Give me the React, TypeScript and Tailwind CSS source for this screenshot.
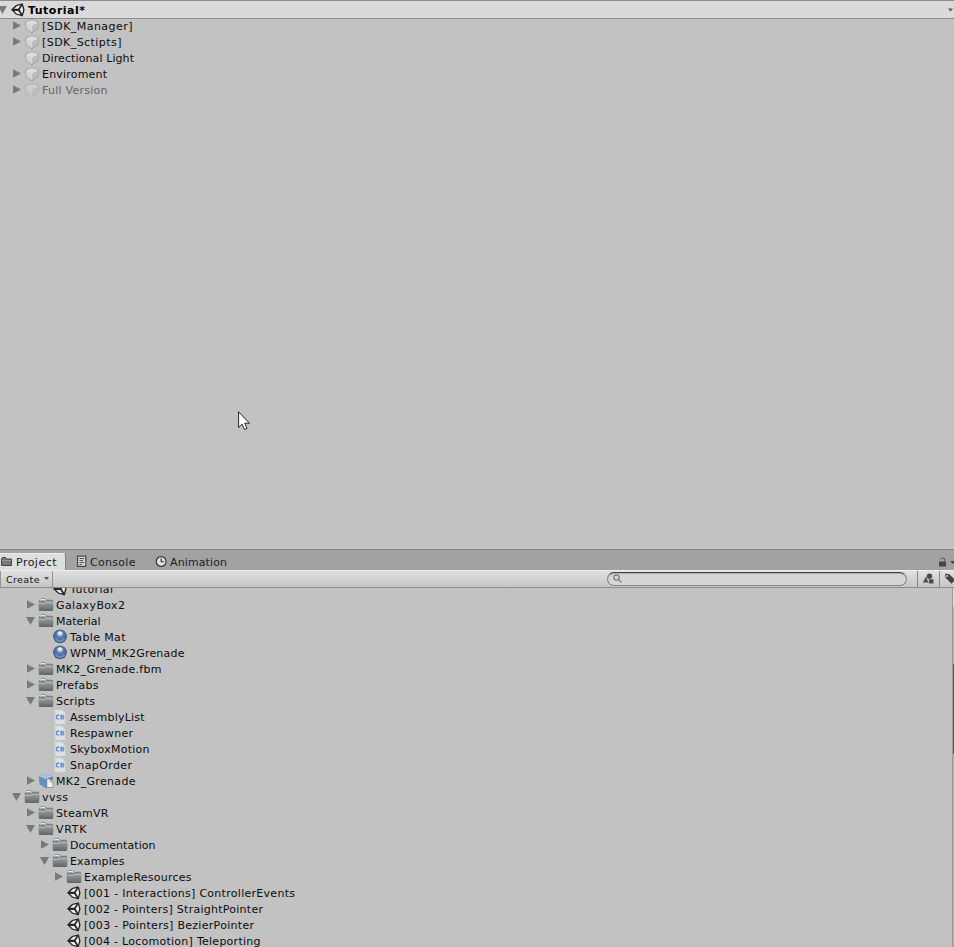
import type { ReactNode } from "react";

type Kind = "cube" | "folder" | "material" | "script" | "model" | "scene";

interface Item {
  label: string;
  kind: Kind;
  depth: number;
  arrow?: "right" | "down";
  dim?: boolean;
  width: number;
}

const hierarchy: Item[] = [
  { label: "[SDK_Manager]", kind: "cube", depth: 1, arrow: "right", width: 90.5 },
  { label: "[SDK_Sctipts]", kind: "cube", depth: 1, arrow: "right", width: 79.5 },
  { label: "Directional Light", kind: "cube", depth: 1, width: 92 },
  { label: "Enviroment", kind: "cube", depth: 1, arrow: "right", width: 65 },
  { label: "Full Version", kind: "cube", depth: 1, arrow: "right", dim: true, width: 65.5 },
];

const project: Item[] = [
  { label: "Tutorial", kind: "scene", depth: 3, width: 43 },
  { label: "GalaxyBox2", kind: "folder", depth: 2, arrow: "right", width: 69 },
  { label: "Material", kind: "folder", depth: 2, arrow: "down", width: 44.5 },
  { label: "Table Mat", kind: "material", depth: 3, width: 55.5 },
  { label: "WPNM_MK2Grenade", kind: "material", depth: 3, width: 114.5 },
  { label: "MK2_Grenade.fbm", kind: "folder", depth: 2, arrow: "right", width: 105.5 },
  { label: "Prefabs", kind: "folder", depth: 2, arrow: "right", width: 42.5 },
  { label: "Scripts", kind: "folder", depth: 2, arrow: "down", width: 39 },
  { label: "AssemblyList", kind: "script", depth: 3, width: 74.5 },
  { label: "Respawner", kind: "script", depth: 3, width: 63 },
  { label: "SkyboxMotion", kind: "script", depth: 3, width: 79.5 },
  { label: "SnapOrder", kind: "script", depth: 3, width: 62 },
  { label: "MK2_Grenade", kind: "model", depth: 2, arrow: "right", width: 79.5 },
  { label: "vvss", kind: "folder", depth: 1, arrow: "down", width: 26 },
  { label: "SteamVR", kind: "folder", depth: 2, arrow: "right", width: 52.5 },
  { label: "VRTK", kind: "folder", depth: 2, arrow: "down", width: 30.5 },
  { label: "Documentation", kind: "folder", depth: 3, arrow: "right", width: 85.5 },
  { label: "Examples", kind: "folder", depth: 3, arrow: "down", width: 54.5 },
  { label: "ExampleResources", kind: "folder", depth: 4, arrow: "right", width: 107.5 },
  { label: "[001 - Interactions] ControllerEvents", kind: "scene", depth: 4, width: 211 },
  { label: "[002 - Pointers] StraightPointer", kind: "scene", depth: 4, width: 179 },
  { label: "[003 - Pointers] BezierPointer", kind: "scene", depth: 4, width: 170 },
  { label: "[004 - Locomotion] Teleporting", kind: "scene", depth: 4, width: 176.5 },
];

/* One line of text whose glyphs are spread over an exact advance width. */
function Label({ text, width, size = 11, bold = false, fill = "#0c0c0c" }: { text: string; width: number; size?: number; bold?: boolean; fill?: string }) {
  return (
    <svg width={width + 4} height="16" className="block shrink-0 overflow-visible font-['DejaVu_Sans',sans-serif]">
      <text x="0" y="12" fontSize={size} fontWeight={bold ? 700 : 400} fill={fill} textLength={width}>
        {text}
      </text>
    </svg>
  );
}

function Icon({ children, className = "" }: { children: ReactNode; className?: string }) {
  return (
    <svg width="16" height="16" viewBox="0 0 16 16" className={`block shrink-0 overflow-visible ${className}`}>
      {children}
    </svg>
  );
}

function UnityMark() {
  return (
    <Icon>
      <path d="M1 7.8 L5.9 3 L12.7 1.2 L14.6 7.8 L12.7 14.4 L5.9 12.6 Z" fill="#262626" />
      <path d="M4.1 6.8 L7 3.9 L10.6 3 L8.2 6.8 Z" fill="#f0f0f0" />
      <path d="M4.1 8.9 H8.2 L10.6 12.6 L7 11.7 Z" fill="#f0f0f0" />
      <path d="M12.1 3.8 L13.1 7.8 L12.1 11.8 L9.7 7.8 Z" fill="#f0f0f0" />
    </Icon>
  );
}

function KindIcon({ kind }: { kind: Kind }) {
  switch (kind) {
    case "cube":
      return (
        <Icon>
          <path d="M8 1.7 L14.3 3.9 L13.7 10.8 L8 14.7 L2.3 10.8 L1.7 3.9 Z" fill="#c9c9c9" stroke="#969696" strokeWidth=".9" />
          <path d="M8 2.1 L13.8 4.1 L8 6.6 L2.2 4.1 Z" fill="#dcdcdc" />
          <path d="M2.2 4.4 L8 6.9 V14.2 L2.7 10.6 Z" fill="#d3d3d3" />
          <path d="M13.8 4.4 L8 6.9 V14.2 L13.3 10.6 Z" fill="#bcbcbc" />
          <path d="M2.6 4.5 L8 6.9 L13.4 4.5" fill="none" stroke="#e8e8e8" strokeWidth=".9" />
        </Icon>
      );
    case "folder":
      return (
        <Icon>
          <defs>
            <linearGradient id="folderFill" x1="0" y1="0" x2="0" y2="1">
              <stop offset="0" stopColor="#989d9f" />
              <stop offset="1" stopColor="#5f696e" />
            </linearGradient>
          </defs>
          <path d="M1.4 13 V3.8 L3 1.8 H7 L8.3 3.2 H14.6 V13 Z" fill="#85898b" stroke="#6d7274" strokeWidth=".7" />
          <path d="M2.4 3.4 L3.2 2.6 H6.6 L7.4 3.6" fill="none" stroke="#ececec" strokeWidth="1.2" />
          <path d="M.5 6.4 H6.6 L8 5.3 H15.5 L15 13.6 H1 Z" fill="url(#folderFill)" />
          <path d="M.6 6.4 H6.6 L8 5.3 H15.4" fill="none" stroke="#c6c9ca" strokeWidth=".8" />
          <path d="M1 13.4 H15" stroke="#555e63" strokeWidth=".8" />
        </Icon>
      );
    case "material":
      return (
        <Icon>
          <defs>
            <radialGradient id="ballFill" cx=".5" cy=".45" r=".55">
              <stop offset="0" stopColor="#6488ba" />
              <stop offset=".65" stopColor="#4d719f" />
              <stop offset="1" stopColor="#40546d" />
            </radialGradient>
          </defs>
          <circle cx="8" cy="7.3" r="6.9" fill="url(#ballFill)" />
          <path d="M3.4 9.8 Q8 14.6 12.6 9.8" fill="none" stroke="#7398c4" strokeWidth="1.5" />
          <ellipse cx="8" cy="4.6" rx="3" ry="2.7" fill="#a9bcd8" />
          <ellipse cx="8" cy="4.2" rx="1.5" ry="1.4" fill="#f4f6fa" />
        </Icon>
      );
    case "script":
      return (
        <Icon>
          <path d="M2.9 1 H10 L13.1 4.2 V15 H2.9 Z" fill="#dfe2e4" stroke="#cbd0d3" strokeWidth=".6" />
          <path d="M7.2 6.2 H5.4 L4.4 7.1 V9.1 L5.4 10 H7.2" fill="none" stroke="#4f82c0" strokeWidth="1.2" />
          <path d="M9.2 5.6 V10.7 M11.1 5.6 V10.7 M8 7.1 H12.3 M8 9.1 H12.3" fill="none" stroke="#4f82c0" strokeWidth=".9" />
        </Icon>
      );
    case "model":
      return (
        <Icon>
          <path d="M8 .8 L14.8 3.6 L14.4 11.2 L8 15 L1.8 11.2 L1.2 3.6 Z" fill="#4777ad" />
          <path d="M8 .8 L14.8 3.6 L8 6.6 L1.2 3.6 Z" fill="#a9c3df" />
          <path d="M1.2 3.6 L8 6.6 V15 L1.8 11.2 Z" fill="#6091c7" />
          <path d="M8.7 6 H12.4 L15 8.6 V14.6 H8.7 Z" fill="#efefef" stroke="#777" strokeWidth=".7" />
          <path d="M12.2 6.1 V8.8 H14.8" fill="#cfcfcf" stroke="#777" strokeWidth=".6" />
        </Icon>
      );
    case "scene":
      return <UnityMark />;
  }
}

function Arrow({ dir }: { dir?: "right" | "down" }) {
  return (
    <svg width="12" height="16" viewBox="0 0 12 16" className="block shrink-0">
      {dir === "right" && <path d="M2 3.2 L10 7.5 L2 11.8 Z" fill="#787a7a" />}
      {dir === "down" && <path d="M1 4 H10 L5.5 12 Z" fill="#787a7a" />}
    </svg>
  );
}

const indent = ["", "pl-[11px]", "pl-[25px]", "pl-[39px]", "pl-[53px]"];

function TreeRow({ item }: { item: Item }) {
  return (
    <div className={`flex h-4 items-center ${indent[item.depth]}`}>
      <Arrow dir={item.arrow} />
      <div className={`ml-px mr-[2px] ${item.dim ? "opacity-50" : ""}`}>
        <KindIcon kind={item.kind} />
      </div>
      <Label text={item.label} width={item.width} fill={item.dim ? "#666666" : "#0c0c0c"} />
    </div>
  );
}

function HierarchyPanel() {
  return (
    <section className="relative h-[548px] shrink-0">
      <header className="flex h-[19px] items-center border-y border-[#8d8d8d] bg-[#dadada]">
        <svg width="10" height="16" className="block shrink-0">
          <path d="M-2 4 H7 L2.5 12 Z" fill="#7b7b7b" />
        </svg>
        <UnityMark />
        <div className="ml-[2px]">
          <Label text="Tutorial*" width={57} bold fill="#000" />
        </div>
        <svg width="6" height="4" className="ml-auto block">
          <path d="M0 .5 H5 L2.5 3.5 Z" fill="#555" />
        </svg>
      </header>
      <div className="-mt-px">
        {hierarchy.map((item) => (
          <TreeRow key={item.label} item={item} />
        ))}
      </div>
      <svg width="14" height="20" viewBox="0 0 14 20" className="absolute left-[238px] top-[411px]">
        <path d="M.6 .8 V16.5 L4.1 13.2 L6.5 18.5 L9 17.4 L6.7 12.2 H11.5 Z" fill="#fff" stroke="#222" strokeWidth="1" />
      </svg>
    </section>
  );
}

function TabBar() {
  return (
    <div className="flex h-[21px] shrink-0 items-end border-t border-[#818181] bg-[#a2a2a2]">
      <div className="flex h-[17px] w-[66px] items-center rounded-tr-[3px] border-r border-t border-[#858585] border-t-[#ededed] bg-[#dedede]">
        <svg width="14" height="12" className="block shrink-0">
          <path d="M1.5 9.5 V3 L2.5 1.5 H5.5 L6.5 3 H11.5 V9.5 Z" fill="#777" stroke="#454545" />
          <path d="M2 4.5 H11" stroke="#999" />
        </svg>
        <div className="ml-[2px]">
          <Label text="Project" width={40.5} fill="#202020" />
        </div>
      </div>
      <div className="ml-[11px] flex h-[17px] items-center">
        <svg width="11" height="13" className="block">
          <rect x=".6" y="1.1" width="8.2" height="10.3" fill="#d2d2d2" stroke="#343434" />
          <path d="M2.5 3.5 H7 M2.5 5.5 H6 M2.5 7.5 H7 M2.5 9.5 H5" stroke="#555" />
        </svg>
        <div className="ml-[2px]">
          <Label text="Console" width={45.5} fill="#202020" />
        </div>
      </div>
      <div className="ml-[15px] flex h-[17px] items-center">
        <svg width="13" height="13" className="block">
          <circle cx="6.2" cy="6.5" r="4.9" fill="#e2e2e2" stroke="#353535" strokeWidth="1.2" />
          <path d="M6.2 3.2 V6.8 H9" fill="none" stroke="#333" strokeWidth="1.1" />
        </svg>
        <div className="ml-[2.5px]">
          <Label text="Animation" width={57} fill="#202020" />
        </div>
      </div>
      <svg width="17" height="14" className="ml-auto block">
        <rect x="2" y="5.5" width="7" height="5" fill="#464646" />
        <path d="M3.5 3.3 Q5.2 1.1 7.6 2.5 V5.5" fill="none" stroke="#555" strokeWidth="1" />
        <path d="M13 5 H19 L16 8 Z" fill="#454545" />
      </svg>
    </div>
  );
}

function Toolbar() {
  return (
    <div className="flex h-[18px] shrink-0 items-center border-b border-t border-[#8d8d8d] border-t-[#eeeeee] bg-gradient-to-b from-[#e0e0e0] to-[#c6c6c6]">
      <button className="flex h-full w-[53px] items-center border-x border-[#929292] pl-[5px]">
        <Label text="Create" width={33.5} size={9.5} fill="#111" />
        <svg width="5" height="4" className="ml-[0.5px] block shrink-0">
          <path d="M0 0 H5 L2.5 3 Z" fill="#555" />
        </svg>
      </button>
      <div className="ml-auto mr-[10px] flex h-[14px] w-[300px] items-center rounded-full border border-[#858585] border-t-[#484848] bg-[#d6d6d6] pl-[5px] shadow-[inset_0_1px_0_#aaaaaa]">
        <svg width="10" height="10" className="block">
          <circle cx="3.5" cy="3.6" r="2.7" fill="none" stroke="#777" strokeWidth="1.1" />
          <path d="M5.5 5.6 L8.5 8.6" stroke="#777" strokeWidth="1.3" />
        </svg>
      </div>
      <div className="flex h-full w-[22px] items-center border-l border-[#858585]">
        <svg width="20" height="14" className="block">
          <circle cx="11.5" cy="4.2" r="2.7" fill="#484848" />
          <path d="M4.8 10.6 L8 4.6 L10.4 10.6 Z" fill="#4f4f4f" />
          <rect x="10.8" y="7" width="5" height="4.8" fill="#4b4b4b" stroke="#c8c8c8" strokeWidth=".5" />
        </svg>
      </div>
      <div className="flex h-full w-[15px] items-center overflow-hidden border-l border-[#858585]">
        <svg width="15" height="14" className="block shrink-0">
          <path d="M5 1.8 L9 1.9 L15 7.8 L11.5 11.8 L5.5 5.8 Z" fill="#444" />
          <circle cx="7" cy="4.1" r="1" fill="#d0d0d0" />
        </svg>
      </div>
    </div>
  );
}

export default function App() {
  return (
    <main className="flex h-[947px] w-[954px] flex-col overflow-hidden bg-[#c2c2c2]">
      <HierarchyPanel />
      <div className="h-px shrink-0 bg-[#c9c9c9]" />
      <TabBar />
      <Toolbar />
      <section className="flex min-h-0 flex-1 overflow-hidden">
        <div className="-mt-[7px] flex-1">
          {project.map((item) => (
            <TreeRow key={item.label} item={item} />
          ))}
        </div>
        <div className="w-[2px] border-l border-[#999999] bg-[#b0b0b0]">
          <div className="h-[19px] bg-[#dedede]" />
          <div className="mt-[57px] h-[90px] rounded-l-sm bg-[#50545c]" />
        </div>
      </section>
    </main>
  );
}
